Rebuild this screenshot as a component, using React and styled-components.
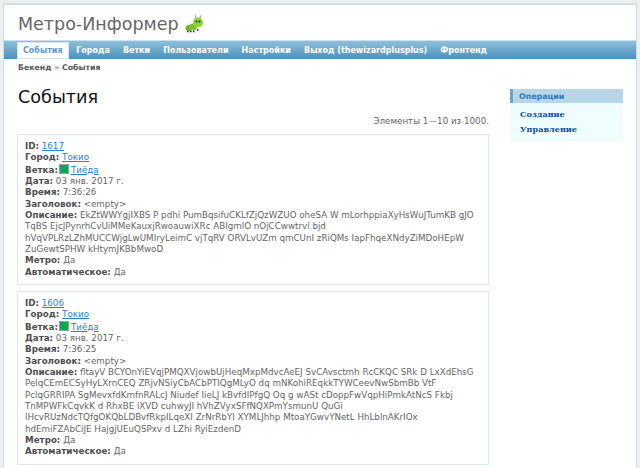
import React from "react";
import styled, { createGlobalStyle } from "styled-components";

const Global = createGlobalStyle`
    html, body {
        margin: 0;
        padding: 0;
        height: 468px;
        overflow: hidden;
        background: #efefef;
        font-family: "DejaVu Sans", sans-serif;
        color: #555;
    }
`;

const Page = styled.div`
    margin: 3px 3px 0;
    height: 465px;
    box-sizing: border-box;
    overflow: hidden;
    background: #fff;
    border: 1px solid #c9e0ed;
    border-top-width: 2px;
    border-bottom: none;
`;

const Header = styled.div`
    height: 35px;
    padding: 3px 0 0 14px;
    box-sizing: border-box;
    display: flex;
    align-items: center;
    gap: 4px;
    font-size: 17.5px;
    color: #666;
`;

const Menu = styled.nav`
    height: 19px;
    padding: 0 0 0 13px;
    display: flex;
    align-items: center;
    gap: 13.1px;
    background: linear-gradient(#8fc0dc, #4a90bd);
    border-top: 1px solid #c9e0ed;
    box-sizing: border-box;
`;

const MenuItem = styled.a`
    font-size: 8px;
    font-weight: bold;
    color: ${(p) => (p.$active ? "#6399cd" : "#fff")};
    ${(p) =>
        p.$active &&
        `
        background: #fff;
        padding: 3px 5px;
        margin-right: -5.5px;
        border: 1px solid #d5e6f2;
    `}
`;

const Crumbs = styled.div`
    padding: 4px 0 0 14px;
    font-size: 7.8px;
    font-weight: bold;
    line-height: 10px;
    color: #555;
    span {
        color: #999;
    }
`;

const Columns = styled.div`
    display: flex;
    padding: 0 13px;
`;

const Main = styled.main`
    width: 472px;
    flex: none;
`;

const Title = styled.h1`
    margin: 12px 0 0 1px;
    font-size: 17.6px;
    font-weight: normal;
    color: #111;
    line-height: 24px;
`;

const Summary = styled.div`
    margin-top: 6px;
    text-align: right;
    font-size: 8.72px;
    line-height: 12px;
    color: #666;
`;

const Card = styled.article`
    margin-top: 7px;
    padding: 6px 7px;
    border: 1px solid #dbe8f2;
    font-size: 8.72px;
    line-height: 11.33px;
    color: #666;
    & + & {
        margin-top: 6px;
    }
`;

const Label = styled.b`
    color: #4d4d4d;
`;

const Line = styled.div`
    white-space: nowrap;
`;

const Link = styled.a`
    color: #2a80d8;
    text-decoration: underline;
`;

const Swatch = styled.span`
    display: inline-block;
    width: 8px;
    height: 8px;
    margin: 0 2px 0 1px;
    vertical-align: -1px;
    background: #0aa858;
    border: 1px solid #a0a0a0;
`;

const Side = styled.aside`
    width: 113px;
    margin: 16px 0 0 auto;
    flex: none;
`;

const SideTitle = styled.div`
    height: 14px;
    display: flex;
    align-items: center;
    box-sizing: border-box;
    padding-left: 6px;
    background: #b7d6e7;
    border-left: 3px solid #6ba3ca;
    font-size: 7.9px;
    font-weight: bold;
    color: #2a7cc0;
`;

const SideList = styled.div`
    background: #effdff;
    padding: 4px 10px 4px;
    font-family: "DejaVu Serif", serif;
    font-size: 8.1px;
    font-weight: bold;
    line-height: 15.2px;
    color: #06519c;
`;

function Caterpillar() {
    return (
        <svg width="22" height="18" viewBox="0 0 22 18">
            <ellipse cx="6" cy="13" rx="3.5" ry="3" fill="#6fb02c" />
            <ellipse cx="10" cy="12" rx="4" ry="3.5" fill="#7cc12f" />
            <ellipse cx="15" cy="7.5" rx="5" ry="5" fill="#8fd435" />
            <circle cx="13.5" cy="6.5" r="1" fill="#234" />
            <circle cx="16.5" cy="6.5" r="1" fill="#234" />
            <path d="M13 3 L12.5 0.5 M17 3 L17.5 0.5" stroke="#888" strokeWidth="1" />
            <path d="M4 16.5h1.5M7 16.5h1.5M10 16.5h1.5M14 15h1.5" stroke="#222" strokeWidth="1.6" />
        </svg>
    );
}

const events = [
    {
        id: 1617,
        time: "7:36:26",
        text: [
            "EkZtWWYgjIXBS P pdhi PumBqsifuCKLfZjQzWZUO oheSA W mLorhppiaXyHsWuJTumKB gJO",
            "TqBS EjcJPynrhCvUiMMeKauxjRwoauwiXRc ABIgmlO nOjCCwwtrvl bjd",
            "hVqVPLRzLZhMUCCWjgLwUMIryLeimC vjTqRV ORVLvUZm qmCUnI zRiQMs IapFhqeXNdyZiMDoHEpW",
            "ZuGewtSPHW kHtymJKBbMwoD",
        ],
    },
    {
        id: 1606,
        time: "7:36:25",
        text: [
            "fltayV BCYOnYiEVqjPMQXVjowbUjHeqMxpMdvcAeEJ SvCAvsctmh RcCKQC SRk D LxXdEhsG",
            "PelqCEmECSyHyLXrnCEQ ZRjvNSiyCbACbPTIQgMLyO dq mNKohiREqkkTYWCeevNwSbmBb VtF",
            "PclqGRRIPA SgMevxfdKmfnRALcJ Niudef IieLJ kBvfdIPfgQ Oq g wASt cDoppFwVqpHiPmkAtNcS Fkbj",
            "TnMPWFkCqvkK d RhxBE iXVD cuhwyJI hVhZVyxSFfNQXPmYsmunU QuGi",
            "lHcvRUzNdcTQfgOKQbLDBvfRkpILqeXI ZrNrRbYI XYMLJhhp MtoaYGwvYNetL HhLblnAKrIOx",
            "hdEmiFZAbCiJE HajgjUEuQSPxv d LZhi RyiEzdenD",
        ],
    },
];

function EventCard({ event }) {
    return (
        <Card>
            <Line>
                <Label>ID:</Label> <Link>{event.id}</Link>
            </Line>
            <Line>
                <Label>Город:</Label> <Link>Токио</Link>
            </Line>
            <Line>
                <Label>Ветка:</Label>
                <Swatch />
                <Link>Тиёда</Link>
            </Line>
            <Line>
                <Label>Дата:</Label> 03 янв. 2017 г.
            </Line>
            <Line>
                <Label>Время:</Label> {event.time}
            </Line>
            <Line>
                <Label>Заголовок:</Label> &lt;empty&gt;
            </Line>
            {event.text.map((row, i) => (
                <Line key={row}>
                    {i === 0 && (
                        <>
                            <Label>Описание:</Label>{" "}
                        </>
                    )}
                    {row}
                </Line>
            ))}
            <Line>
                <Label>Метро:</Label> Да
            </Line>
            <Line>
                <Label>Автоматическое:</Label> Да
            </Line>
        </Card>
    );
}

export default function App() {
    const items = ["Города", "Ветки", "Пользователи", "Настройки", "Выход (thewizardplusplus)", "Фронтенд"];
    return (
        <>
            <Global />
            <Page>
                <Header>
                    Метро-Информер <Caterpillar />
                </Header>
                <Menu>
                    <MenuItem $active>События</MenuItem>
                    {items.map((item) => (
                        <MenuItem key={item}>{item}</MenuItem>
                    ))}
                </Menu>
                <Crumbs>
                    Бекенд <span>»</span> События
                </Crumbs>
                <Columns>
                    <Main>
                        <Title>События</Title>
                        <Summary>Элементы 1—10 из 1000.</Summary>
                        {events.map((event) => (
                            <EventCard key={event.id} event={event} />
                        ))}
                    </Main>
                    <Side>
                        <SideTitle>Операции</SideTitle>
                        <SideList>
                            <div>Создание</div>
                            <div>Управление</div>
                        </SideList>
                    </Side>
                </Columns>
            </Page>
        </>
    );
}
